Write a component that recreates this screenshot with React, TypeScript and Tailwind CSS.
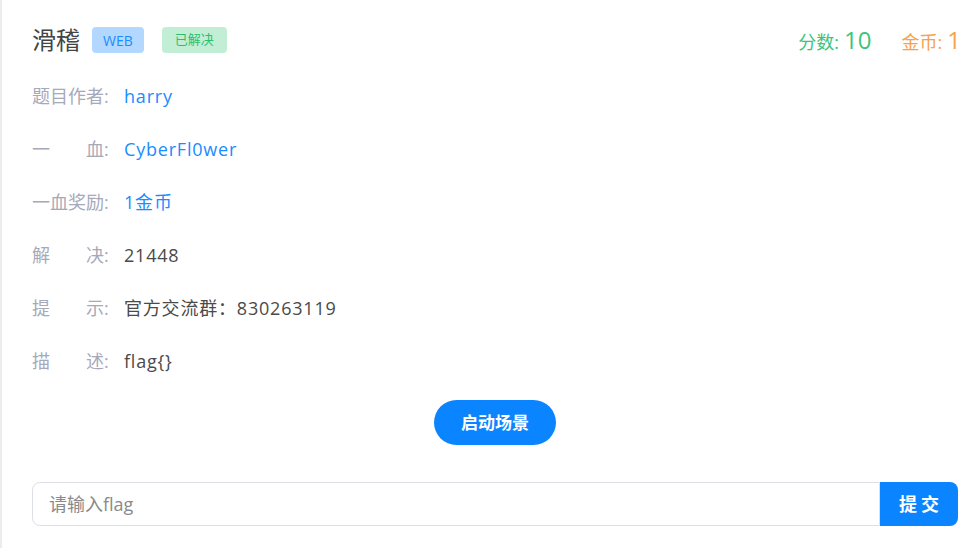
import React from 'react';

const font = { fontFamily: '"Open Sans", "Noto Sans CJK SC", sans-serif' };

const rows: { label: string; value: string; tone: 'link' | 'text' }[] = [
  { label: '题目作者', value: 'harry', tone: 'link' },
  { label: '一血', value: 'CyberFl0wer', tone: 'link' },
  { label: '一血奖励', value: '1金币', tone: 'link' },
  { label: '解决', value: '21448', tone: 'text' },
  { label: '提示', value: '官方交流群：830263119', tone: 'text' },
  { label: '描述', value: 'flag{}', tone: 'text' },
];

const InfoRow: React.FC<{ label: string; value: string; tone: 'link' | 'text' }> = ({ label, value, tone }) => (
  <div className="flex items-center h-[53px] text-[18px]">
    <div className="flex w-[92px] shrink-0 text-[#a6a9b9]">
      <span className="w-[72px] [text-align-last:justify]">{label}</span>
      <span>:</span>
    </div>
    <span className={'tracking-[0.8px] ' + (tone === 'link' ? 'text-[#1a8cff]' : 'text-[#4a4a4a]')}>{value}</span>
  </div>
);

export default function App() {
  return (
    <div className="flex w-[971px] h-[548px] bg-white overflow-hidden" style={font}>
      <div className="w-[2px] shrink-0 bg-[#ececec]" />
      <div className="flex-1 pl-[30px] pr-[13px] pt-[22px]">
        <div className="flex items-center justify-between h-[36px]">
          <div className="flex items-center">
            <h1 className="text-[24px] text-[#444] leading-none">滑稽</h1>
            <span className="ml-[12px] h-[26px] px-[11px] flex items-center rounded-[4px] bg-[#b3d8ff] text-[#1a8cff] text-[14px]">WEB</span>
            <span className="ml-[18px] h-[26px] px-[13px] flex items-center rounded-[4px] bg-[#c2eed6] text-[#2dbe6c] text-[13px]">已解决</span>
          </div>
          <div className="flex items-baseline -mr-[3px]">
            <span className="text-[#3cc47c] text-[18px]">分数:</span>
            <span className="text-[#3cc47c] text-[24px] ml-[5px]">10</span>
            <span className="text-[#f9a04b] text-[18px] ml-[30px]">金币:</span>
            <span className="text-[#f9a04b] text-[24px] ml-[5px]">1</span>
          </div>
        </div>

        <div className="mt-[12px]">
          {rows.map((r, i) => (
            <InfoRow key={i} {...r} />
          ))}
        </div>

        <div className="flex justify-center mt-[12px]">
          <button className="w-[122px] h-[45px] rounded-full bg-[#0a84ff] text-white text-[17px] font-bold">启动场景</button>
        </div>

        <div className="flex mt-[37px] h-[44px]">
          <input
            className="flex-1 h-full border border-[#dcdfe6] rounded-l-[8px] pl-[16px] text-[18px] outline-none placeholder:text-[#8a8a8a]"
            placeholder="请输入flag"
          />
          <button className="w-[78px] h-full rounded-r-[8px] bg-[#0a84ff] text-white text-[18px] font-bold tracking-[4px] pl-[4px]">提交</button>
        </div>
      </div>
    </div>
  );
}
